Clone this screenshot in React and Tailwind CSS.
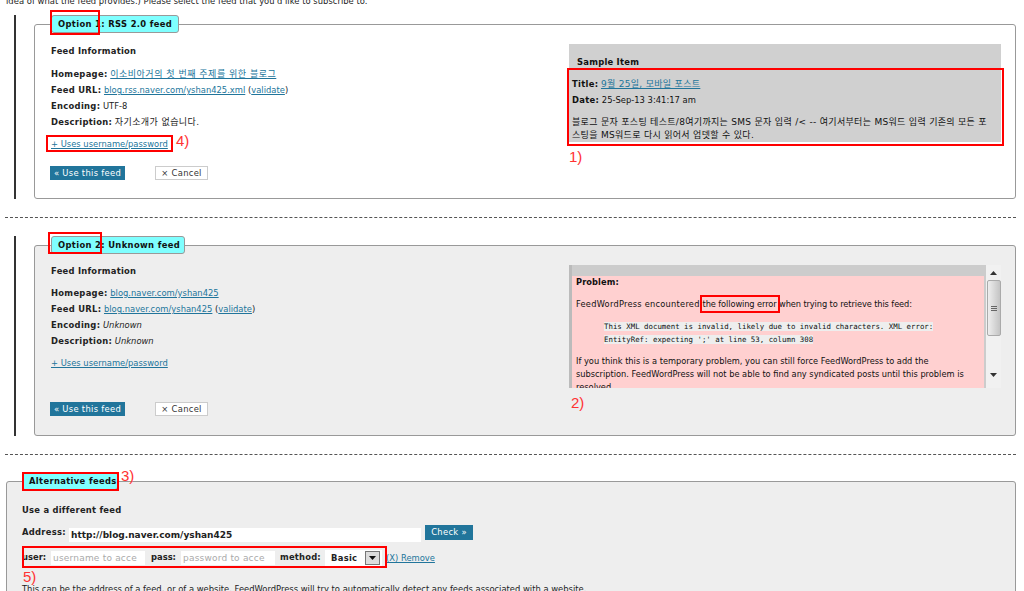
import React from "react";

const Lnk = ({ children, className = "" }) => <a className={`text-[#21759b] underline ${className}`}>{children}</a>;
const B = ({ children }) => <b className="font-bold tracking-[0.3px]">{children}</b>;

function Legend({ children, width }) {
  return (
    <legend className={`${width} ml-[16px] h-[18px] rounded-[3px] border border-[#999] bg-[#7fffff] pl-[6px] text-[8.4px] leading-[16px] font-bold tracking-[0.35px] whitespace-nowrap text-[#111]`}>
      {children}
    </legend>
  );
}

function Row({ label, children }) {
  return (
    <div className="h-[16px] leading-[16px] whitespace-nowrap">
      <B>{label}:</B> {children}
    </div>
  );
}

function Buttons({ top }) {
  return (
    <div className={`ml-[-1px] flex items-center gap-[30px] ${top}`}>
      <div className="h-[14px] w-[75px] bg-[#21759b] text-center leading-[14px] tracking-[0.3px] text-white">« Use this feed</div>
      <div className="h-[14px] w-[53px] border border-[#ccc] bg-white text-center leading-[12px] tracking-[0.3px] text-[#333]">× Cancel</div>
    </div>
  );
}

function Note({ className, children }) {
  return <span className={`absolute font-['Liberation_Sans',sans-serif] text-[15px] leading-[16px] text-[#f33] ${className}`}>{children}</span>;
}

function Box({ className }) {
  return <div className={`absolute border-2 border-[#f00] ${className}`} />;
}

function Scrollbar() {
  return (
    <div className="flex w-[15px] flex-col items-center bg-[#f1f1f1]">
      <svg width="7" height="4" viewBox="0 0 7 4" className="mt-[6px]"><path d="M3.5 0 7 4H0z" fill="#333" /></svg>
      <div className="mt-[5px] flex h-[56px] w-[14px] flex-col items-center justify-center gap-[1px] rounded-[2px] border border-[#aaa] bg-gradient-to-r from-[#eee] to-[#c4c4c4]">
        <i className="block h-[1px] w-[6px] bg-[#666]" />
        <i className="block h-[1px] w-[6px] bg-[#666]" />
        <i className="block h-[1px] w-[6px] bg-[#666]" />
      </div>
      <svg width="7" height="4" viewBox="0 0 7 4" className="mt-[37px]"><path d="M3.5 4 7 0H0z" fill="#333" /></svg>
    </div>
  );
}

export default function App() {
  return (
    <div className="relative h-[591px] w-[1024px] overflow-hidden bg-white font-['DejaVu_Sans','Noto_Sans_CJK_KR',sans-serif] text-[8.4px] text-[#222]">
      <div className="mt-[-5px] ml-[6px] h-[20px] leading-[12px] tracking-[0.03px]">
        idea of what the feed provides.) Please select the feed that you'd like to subscribe to.
      </div>

      {/* Option 1 */}
      <div className="ml-[14px] h-[184px] w-[1002px] border-l-2 border-[#333] pl-[18px]">
        <fieldset className="h-[184px] rounded-[3px] border border-[#999] bg-white">
          <Legend width="w-[128px]">Option 1: RSS 2.0 feed</Legend>
          <div className="flex justify-between pr-[14px] pl-[16px]">
            <div>
              <div className="mt-[10px] mb-[7px] h-[16px] leading-[16px] font-bold tracking-[0.25px]">Feed Information</div>
              <Row label="Homepage"><Lnk className="text-[9px] tracking-[0.5px]">이소비아거의 첫 번째 주제를 위한 블로그</Lnk></Row>
              <Row label="Feed URL"><Lnk>blog.rss.naver.com/yshan425.xml</Lnk> (<Lnk>validate</Lnk>)</Row>
              <Row label="Encoding">UTF-8</Row>
              <Row label="Description"><span className="text-[9px] tracking-[0.4px]">자기소개가 없습니다.</span></Row>
              <div className="mt-[6px] leading-[16px]"><Lnk>+ Uses username/password</Lnk></div>
              <Buttons top="mt-[14px]" />
            </div>
            <div className="mt-[11px] h-[98px] w-[432px] bg-[#d0d0d0] px-[3px] pt-[11px] text-[#111]">
              <div className="pl-[5px] leading-[14px] font-bold tracking-[0.25px]">Sample Item</div>
              <div className="mt-[7px] h-[16px] leading-[16px]"><B>Title:</B> <Lnk className="text-[9px] tracking-[0.3px]">9월 25일, 모바일 포스트</Lnk></div>
              <div className="h-[16px] leading-[16px]"><B>Date:</B> 25-Sep-13 3:41:17 am</div>
              <p className="mt-[8px] text-[9px] leading-[13px] tracking-[0.3px] whitespace-nowrap">블로그 문자 포스팅 테스트/8여기까지는 SMS 문자 입력 /&lt; -- 여기서부터는 MS워드 입력 기존의 모든 포<br />스팅을 MS워드로 다시 읽어서 업뎃할 수 있다.</p>
            </div>
          </div>
        </fieldset>
      </div>

      <div className="mt-[18px] ml-[5px] h-0 w-[1011px] border-t border-dashed border-[#555]" />

      {/* Option 2 */}
      <div className="mt-[18px] ml-[14px] h-[200px] w-[1002px] border-l-2 border-[#333] pl-[18px]">
        <fieldset className="h-[200px] rounded-[3px] border border-[#999] bg-[#eee]">
          <Legend width="w-[134px]">Option 2: Unknown feed</Legend>
          <div className="flex justify-between pr-[14px] pl-[16px]">
            <div>
              <div className="mt-[9px] mb-[6px] h-[16px] leading-[16px] font-bold tracking-[0.25px]">Feed Information</div>
              <Row label="Homepage"><Lnk>blog.naver.com/yshan425</Lnk></Row>
              <Row label="Feed URL"><Lnk>blog.naver.com/yshan425</Lnk> (<Lnk>validate</Lnk>)</Row>
              <Row label="Encoding"><i>Unknown</i></Row>
              <Row label="Description"><i>Unknown</i></Row>
              <div className="mt-[6px] leading-[16px]"><Lnk>+ Uses username/password</Lnk></div>
              <Buttons top="mt-[31px]" />
            </div>
            <div className="mt-[11px] flex h-[123px] w-[432px] text-[#111]">
              <div className="h-[123px] w-[417px] overflow-hidden border-l-[3px] border-[#bbb] bg-[#ccc] pt-[11px] pr-[2px]">
                <div className="h-[130px] bg-[#ffd0d0] pl-[4px] text-[8.25px] leading-[13px]">
                  <div className="font-bold tracking-[0.1px]">Problem:</div>
                  <p className="mt-[9px] tracking-[-0.1px]"><span className="tracking-[0.25px]">FeedWordPress encountered </span>the following error when trying to retrieve this feed:</p>
                  <div className="mt-[9px] ml-[28px] w-[336px] font-['DejaVu_Sans_Mono',monospace] text-[7.4px] leading-[13px]">
                    <span className="bg-[#eee]">This XML document is invalid, likely due to invalid characters. XML error: EntityRef: expecting ';' at line 53, column 308</span>
                  </div>
                  <p className="mt-[9px] w-[395px]">If you think this is a temporary problem, you can still force FeedWordPress to add the subscription. FeedWordPress will not be able to find any syndicated posts until this problem is resolved.</p>
                </div>
              </div>
              <Scrollbar />
            </div>
          </div>
        </fieldset>
      </div>

      <div className="mt-[18px] ml-[5px] h-0 w-[1011px] border-t border-dashed border-[#555]" />

      {/* Alternative feeds */}
      <fieldset className="mt-[17px] ml-[6px] h-[140px] w-[1010px] rounded-[3px] border border-[#999] bg-[#eee] pl-[15px]">
        <Legend width="w-[96px] !ml-0">Alternative feeds</Legend>
        <div className="mt-[12px] h-[16px] leading-[16px] font-bold tracking-[0.25px]">Use a different feed</div>
        <div className="mt-[7px] flex items-start">
          <div className="mt-[1px] w-[47px]"><B>Address:</B></div>
          <div className="mt-[3px] h-[14px] w-[352px] bg-white pl-[2px] text-[9px] leading-[14px] font-bold text-[#222]">http://blog.naver.com/yshan425</div>
          <div className="ml-[4px] h-[15px] w-[48px] bg-[#21759b] text-center leading-[14px] tracking-[0.3px] text-white">Check »</div>
        </div>
        <div className="mt-[7px] flex h-[18px] items-center">
          <b className="mt-[-2px] w-[29px] font-bold">user:</b>
          <div className="h-[14px] w-[94px] overflow-hidden bg-white pl-[2px] text-[9px] leading-[14px] tracking-[0.2px] whitespace-nowrap text-[#aaa]">username to acce</div>
          <b className="mt-[-2px] ml-[6px] w-[30px] font-bold">pass:</b>
          <div className="h-[14px] w-[94px] overflow-hidden bg-white pl-[2px] text-[9px] leading-[14px] tracking-[0.2px] whitespace-nowrap text-[#aaa]">password to acce</div>
          <b className="mt-[-2px] ml-[5px] w-[45px] font-bold tracking-[0.2px]">method:</b>
          <div className="flex h-[17px] w-[57px] items-center justify-between bg-white pr-[2px] pl-[6px]">
            <b className="font-bold tracking-[0.3px]">Basic</b>
            <div className="flex h-[14px] w-[15px] items-center justify-center border border-[#777] bg-[#ddd]">
              <svg width="7" height="4" viewBox="0 0 7 4"><path d="M0 0h7L3.5 4z" fill="#111" /></svg>
            </div>
          </div>
          <div className="ml-[4px]"><Lnk>(X) Remove</Lnk></div>
        </div>
        <p className="mt-[16px] leading-[12px] whitespace-nowrap">This can be the address of a feed, or of a website. FeedWordPress will try to automatically detect any feeds associated with a website.</p>
      </fieldset>

      {/* red annotations */}
      <Box className="top-[10px] left-[50px] h-[25px] w-[50px]" />
      <Box className="top-[135px] left-[46px] h-[17px] w-[127px]" />
      <Note className="top-[133px] left-[176px]">4)</Note>
      <Box className="top-[68px] left-[567px] h-[78px] w-[437px]" />
      <Note className="top-[149px] left-[569px]">1)</Note>
      <Box className="top-[232px] left-[48px] h-[22px] w-[54px]" />
      <Box className="top-[295px] left-[700px] h-[18px] w-[80px]" />
      <Note className="top-[395px] left-[571px]">2)</Note>
      <Box className="top-[472px] left-[22px] h-[19px] w-[97px]" />
      <Note className="top-[468px] left-[121px]">3)</Note>
      <Box className="top-[546px] left-[22px] h-[22px] w-[365px]" />
      <Note className="top-[569px] left-[23px]">5)</Note>
    </div>
  );
}
